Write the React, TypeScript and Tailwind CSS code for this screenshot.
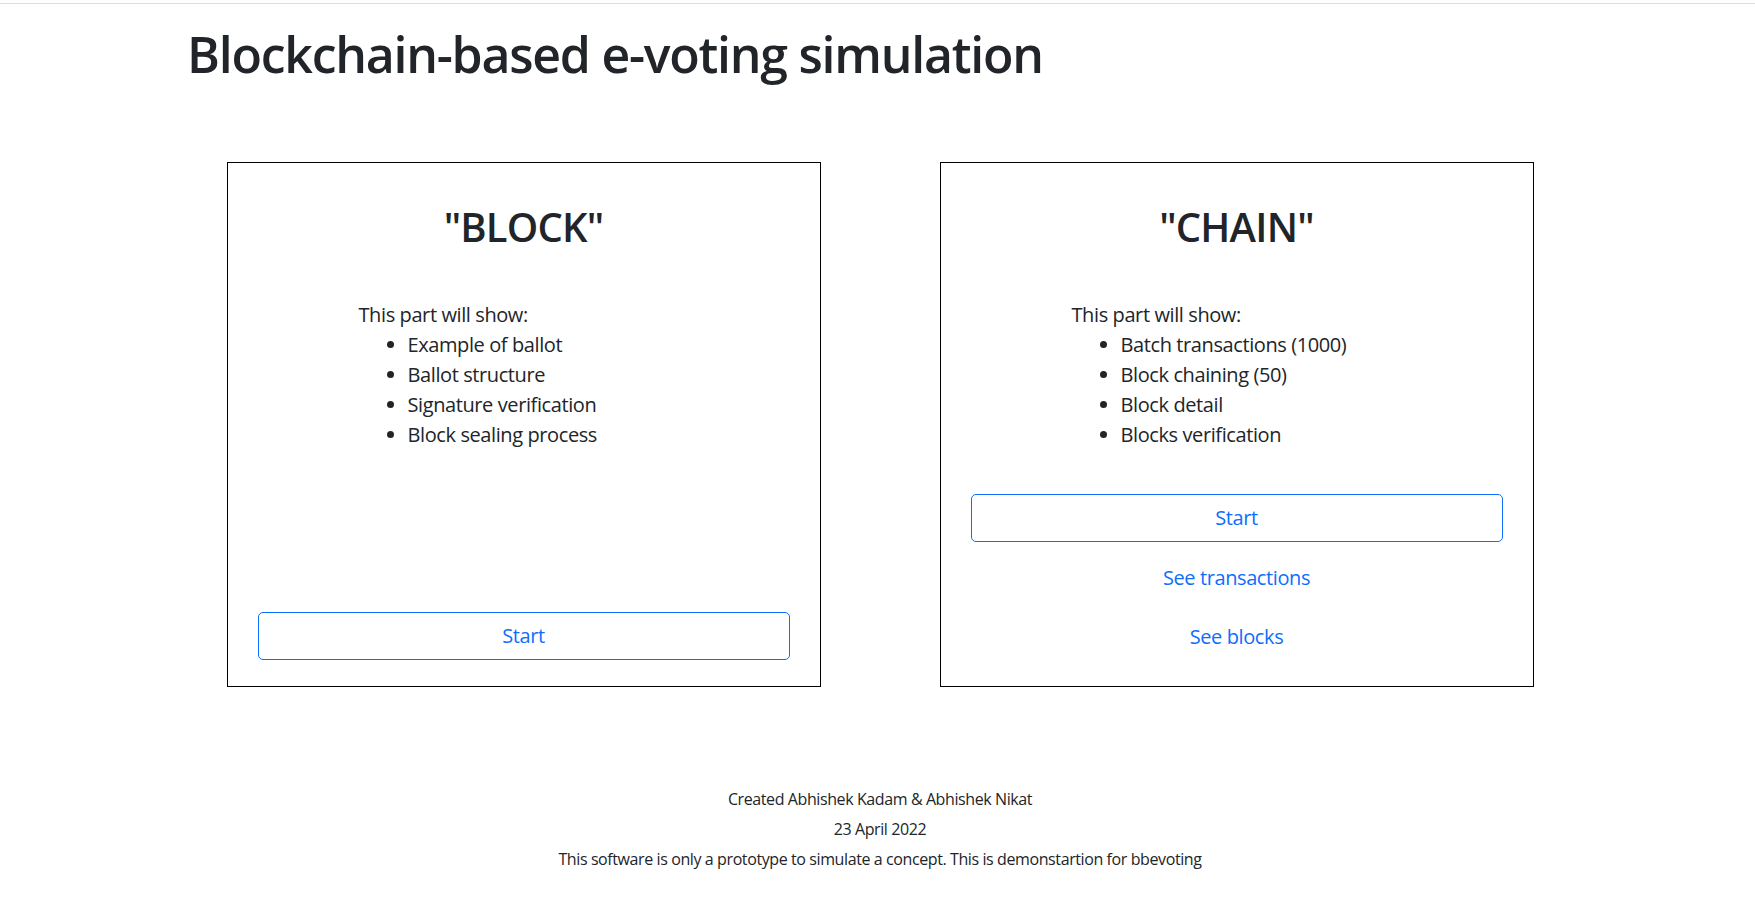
const blockItems = [
  "Example of ballot",
  "Ballot structure",
  "Signature verification",
  "Block sealing process",
];

const chainItems = [
  "Batch transactions (1000)",
  "Block chaining (50)",
  "Block detail",
  "Blocks verification",
];

function FeatureList({ items }: { items: string[] }) {
  return (
    <div className="mt-[49px] pl-[101px] text-[20px] leading-[30px] tracking-[-0.02em] text-[#212529]">
      <div>This part will show:</div>
      <ul className="list-disc pl-[49px]">
        {items.map((item) => (
          <li key={item}>{item}</li>
        ))}
      </ul>
    </div>
  );
}

function OutlineButton({ className = "" }: { className?: string }) {
  return (
    <button
      className={`w-full rounded-[5px] border border-[#0d6efd] bg-white py-2 text-[20px] leading-[30px] tracking-[-0.02em] text-[#0d6efd] ${className}`}
    >
      Start
    </button>
  );
}

function LinkButton({ label, className = "" }: { label: string; className?: string }) {
  return (
    <button
      className={`w-full border border-transparent py-2 text-[20px] leading-[30px] tracking-[-0.02em] text-[#0d6efd] ${className}`}
    >
      {label}
    </button>
  );
}

export default function App() {
  return (
    <div
      className="min-h-[902px] bg-white text-[#212529]"
      style={{ fontFamily: '"Open Sans", "Noto Sans", sans-serif' }}
    >
      <div className="h-[4px] border-b border-[#dedede]" />

      <div className="pl-[187px] pt-[20px]">
        <h1 className="text-[50px] font-semibold leading-[60px] tracking-[-0.025em]">
          Blockchain-based e-voting simulation
        </h1>
      </div>

      <div className="mt-[78px] flex justify-center gap-[119px] pl-[5px]">
        <div className="flex w-[594px] flex-col border border-black px-[30px] pb-[26px] pt-[40px]">
          <h2 className="text-center text-[40px] font-semibold leading-[48px] tracking-[-0.02em]">"BLOCK"</h2>
          <FeatureList items={blockItems} />
          <OutlineButton className="mt-auto" />
        </div>

        <div className="flex w-[594px] flex-col border border-black px-[30px] pb-[25px] pt-[40px]">
          <h2 className="text-center text-[40px] font-semibold leading-[48px] tracking-[-0.02em]">"CHAIN"</h2>
          <FeatureList items={chainItems} />
          <OutlineButton className="mt-[44px]" />
          <LinkButton label="See transactions" className="mt-[12px]" />
          <LinkButton label="See blocks" className="mt-[11px]" />
        </div>
      </div>

      <footer className="mt-[100px] pl-[5px] text-center text-[16px] leading-[24px] tracking-[-0.025em]">
        <p className="mb-[6px]">Created Abhishek Kadam &amp; Abhishek Nikat</p>
        <p className="mb-[6px]">23 April 2022</p>
        <p>This software is only a prototype to simulate a concept. This is demonstartion for bbevoting</p>
      </footer>
    </div>
  );
}
